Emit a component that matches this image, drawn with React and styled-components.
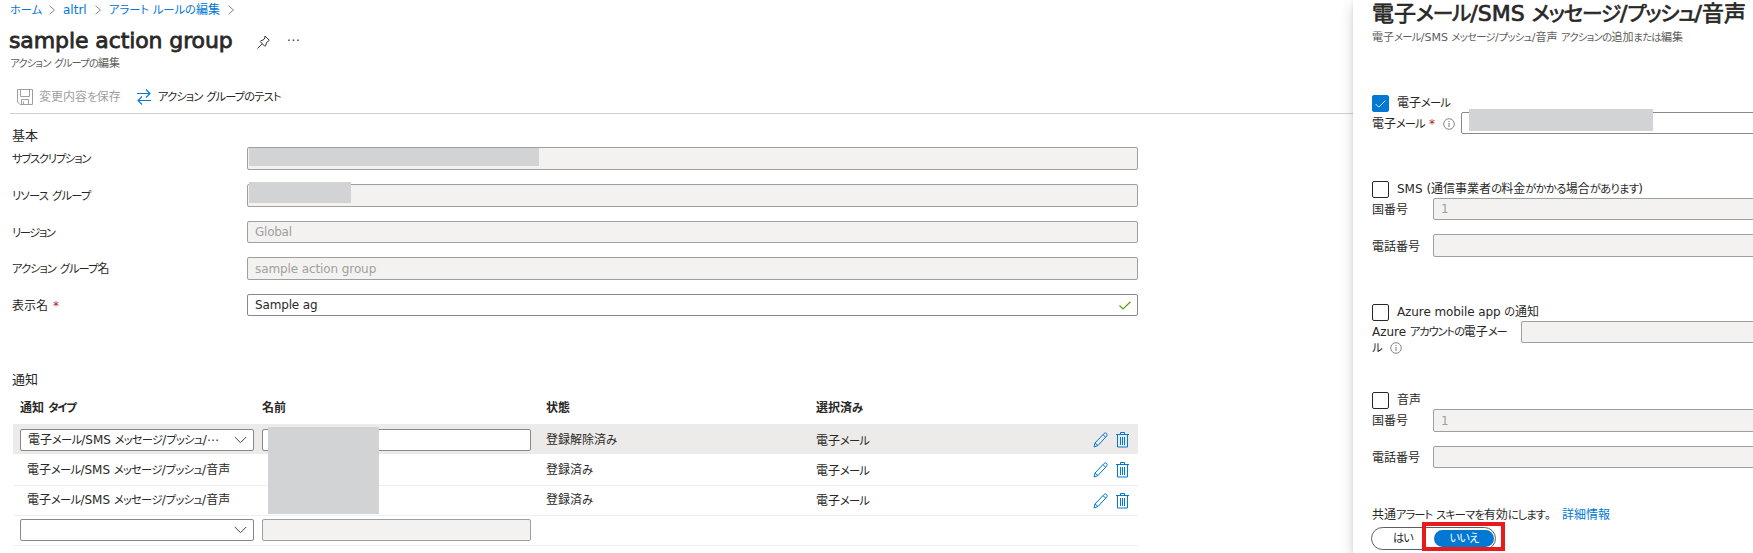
import React from "react";
import styled, { createGlobalStyle, css } from "styled-components";

const GlobalStyle = createGlobalStyle`
  * { box-sizing: border-box; }
  html, body { margin: 0; background: #fff; overflow: hidden; }
  body {
    font-family: "DejaVu Sans", "Noto Sans CJK JP", sans-serif;
    font-size: 12px;
    line-height: 16px;
    color: #292827;
  }
`;

const Shell = styled.div`
  display: flex;
  width: 1753px;
  height: 553px;
  overflow: hidden;
`;

const Main = styled.main`
  width: 1353px;
  flex: none;
  display: flex;
  flex-direction: column;
`;

const TextBox = styled.span`
  display: inline-block;
  flex: none;
  width: ${(p) => p.$w}px;
  white-space: nowrap;
  font-feature-settings: "palt";
  letter-spacing: ${(p) => p.$ls ?? 0}px;
  font-size: ${(p) => p.$size || 12}px;
  font-weight: ${(p) => p.$weight || 400};
  line-height: ${(p) => p.$line || 16}px;
  color: ${(p) => p.$color || "inherit"};
  ${(p) => p.$stroke && css`-webkit-text-stroke: ${p.$stroke}px currentColor;`}
`;

/* Kana are set slightly smaller and tighter than kanji, as in UI fonts. */
const Kana = styled.span`
  font-size: 0.94em;
  letter-spacing: ${(p) => p.$k}px;
`;

const Text = ({ k = 0, children, ...rest }) => (
  <TextBox {...rest}>
    {children.split(/([\u3040-\u30ff]+)/).map((run, i) =>
      i % 2 ? <Kana key={i} $k={k}>{run}</Kana> : run
    )}
  </TextBox>
);

const Required = styled.span`
  color: #a4262c;
  margin-left: 5px;
  width: 6px;
`;

const Breadcrumb = styled.nav`
  display: flex;
  align-items: center;
  height: 20px;
  padding-left: 10px;
  gap: 7px;
  color: #0078d4;
`;

const TitleRow = styled.header`
  display: flex;
  align-items: center;
  height: 28px;
  margin: 7px 0 0 9px;
`;

const Dots = styled.span`
  letter-spacing: 0.7px;
  margin-left: 17px;
`;

const Subtitle = styled.div`
  display: flex;
  height: 17px;
  padding-left: ${(p) => p.$left}px;
  color: #605e5c;
`;

const Toolbar = styled.div`
  display: flex;
  align-items: center;
  height: 30px;
  margin-top: 12px;
  padding: 0 0 5px 17px;
`;

const ToolButton = styled.div`
  display: flex;
  align-items: center;
  gap: ${(p) => p.$gap}px;
  margin-right: 16px;
  color: ${(p) => (p.$disabled ? "#a19f9d" : "#292827")};

  ${TextBox} {
    padding-top: 1px;
  }
`;

const Divider = styled.hr`
  width: 1343px;
  height: 1px;
  border: 0;
  margin: -1px 0 0 10px;
  background: #d0cfce;
`;

const SectionTitle = styled.h2`
  margin: ${(p) => p.$top}px 0 0 12px;
  font-weight: 400;
  height: 16px;
  display: flex;
`;

const Form = styled.div`
  display: grid;
  grid-template-rows: 37px 37px 36px 37px 22px;
  margin-top: 3px;
  padding-left: 12px;
`;

const Field = styled.div`
  display: flex;
  align-items: flex-start;
`;

const FieldLabel = styled.div`
  display: flex;
  width: 235px;
  padding-top: 4px;
`;

const Input = styled.div`
  position: relative;
  display: flex;
  align-items: center;
  justify-content: space-between;
  flex: none;
  width: ${(p) => p.$w}px;
  height: ${(p) => p.$h || 22}px;
  padding: 0 6px 0 7px;
  border: 1px solid ${(p) => (p.$disabled ? "#a19f9d" : "#8a8886")};
  border-radius: 2px;
  background: ${(p) => (p.$disabled ? "#f3f2f1" : "#fff")};
  color: ${(p) => (p.$disabled ? "#a19f9d" : "#292827")};
`;

const Mask = styled.span`
  position: absolute;
  z-index: 1;
  left: ${(p) => p.$x}px;
  top: ${(p) => p.$y}px;
  width: ${(p) => p.$w}px;
  height: ${(p) => p.$h}px;
  background: #d1d3d4;
`;

const Table = styled.div`
  margin: 12px 0 0 13px;
  width: 1125px;
`;

const columns = css`
  display: grid;
  grid-template-columns: 242px 284px 270px 277px 45px;
  padding-left: 7px;
`;

const HeadRow = styled.div`
  ${columns}
  height: 24px;
`;

const Row = styled.div`
  ${columns}
  height: ${(p) => p.$h}px;
  padding-top: ${(p) => p.$top}px;
  background: ${(p) => (p.$selected ? "#edebe9" : "#fff")};
  margin-bottom: ${(p) => (p.$selected ? 1 : 0)}px;
  border-bottom: ${(p) => (p.$selected ? 0 : 1)}px solid #f0efee;
`;

const Cell = styled.div`
  display: flex;
  align-items: flex-start;
  padding: ${(p) => p.$pad || "0"};
`;

const Actions = styled.div`
  display: flex;
  gap: 8px;
  padding-top: ${(p) => p.$top}px;
`;

const Panel = styled.aside`
  width: 400px;
  flex: none;
  position: relative;
  padding-left: 19px;
  background: #fff;
  box-shadow: 0 6px 14px rgba(0, 0, 0, 0.15), 0 1px 4px rgba(0, 0, 0, 0.11);
`;

const PanelTitle = styled.h1`
  margin: 0;
  height: 29px;
  display: flex;
`;

const CheckRow = styled.div`
  display: flex;
  gap: 8px;
  height: 17px;
  margin-top: ${(p) => p.$top}px;
`;

const CheckBox = styled.span`
  display: flex;
  align-items: center;
  justify-content: center;
  width: 17px;
  height: 17px;
  border: 1px solid ${(p) => (p.$on ? "#0078d4" : "#292827")};
  border-radius: 2px;
  background: ${(p) => (p.$on ? "#0078d4" : "#fff")};
`;

const PanelField = styled.div`
  display: flex;
  margin-top: ${(p) => p.$top || 0}px;
  width: 381px;
`;

const PanelLabel = styled.div`
  display: flex;
  flex: none;
  width: ${(p) => p.$w}px;
  padding-top: ${(p) => p.$top ?? 4}px;
`;

const StackedLabel = styled(PanelLabel)`
  flex-direction: column;
`;

const LabelLine = styled.div`
  display: flex;
  height: 16px;
`;

const IconSlot = styled.span`
  display: flex;
  margin-left: ${(p) => p.$left || 0}px;
  padding-top: ${(p) => p.$top || 0}px;
`;

const SchemaRow = styled.div`
  display: flex;
  gap: 11px;
  margin-top: 39px;
`;

const Toggle = styled.div`
  position: relative;
  display: flex;
  width: 125px;
  height: 23px;
  margin: 3px 0 0 -1px;
  border: 1px solid #605e5c;
  border-radius: 12px;
  padding: 2px 1px 2px 21px;
`;

const ToggleOn = styled.span`
  display: flex;
  justify-content: center;
  margin-left: 21px;
  width: 60px;
  height: 17px;
  border-radius: 9px;
  background: #0078d4;
  color: #fff;
`;

const Highlight = styled.span`
  position: absolute;
  left: 50px;
  top: -6px;
  width: 83px;
  height: 29px;
  border: 4px solid #e81a1c;
`;

const Svg = ({ w, h, children, color = "#0078d4", sw = 1, vb }) => (
  <svg width={w} height={h} viewBox={vb || `0 0 ${w} ${h}`} fill="none" stroke={color} strokeWidth={sw}>
    {children}
  </svg>
);
const Crumb = () => <Svg w={7} h={10} color="#8a8886"><path d="M.5.8l5 4.200-5 4.200" /></Svg>;
const Pin = () => (
  <Svg w={13} h={14} color="#323130"><path d="M8 1l4.300 4.300-1 .7L9.300 8l-.5 2.600-1 .7-4.600-4.800.8-.9L6.300 5l1.500-2zM5.200 8.800L.5 13.500" /></Svg>
);
const Save = () => (
  <Svg w={16} h={16} color="#a19f9d"><path d="M.5.5h15v15H3L.5 13zM3.500.5v7h9v-7M4.500 15.500v-5h7v5M6.500 12.500v3" /></Svg>
);
const Swap = () => (
  <Svg w={14} h={16} sw={1.1}><path d="M0 4.500h13M9 .5l4 4-4 4M14 11.500H1M5 7.500l-4 4 4 4" /></Svg>
);
const Check = ({ color, w = 12, h = 9, sw = 1.2 }) => (
  <Svg w={w} h={h} vb="0 0 12 9" color={color} sw={sw}><path d="M.5 4.500l3.500 3.500L11.500.7" /></Svg>
);
const Down = () => <Svg w={13} h={8} color="#484644"><path d="M.8 1l5.700 5.700L12.200 1" /></Svg>;
const Pencil = () => (
  <Svg w={15} h={16}><path d="M1 15l1-4L11 1.500c1.800-1.500 4 .5 2.700 2.500L5 13.500zM2 11l3 2.500M10 2.700l2.700 2.500" /></Svg>
);
const Trash = () => (
  <Svg w={13} h={16}><path d="M0 2.500h13M4.500 2.500v-2h4v2M1.500 2.500v12.500h10v-12.500M4.500 5v8M6.500 5v8M8.500 5v8" /></Svg>
);
const Info = () => (
  <Svg w={12} h={12} color="#797775"><circle cx="6" cy="6" r="5.300" strokeWidth=".9" /><path d="M6 5v4M6 3v1" /></Svg>
);

const MAIL = "電子メール/SMS メッセージ/プッシュ/音声";
const Mail = () => <Text $w={53} k={-0.83}>電子メール</Text>;
const MailType = () => <Text $w={203} k={-0.7}>{MAIL}</Text>;

export default function App() {
  return (
    <>
      <GlobalStyle />
      <Shell lang="ja">
        <Main>
          <Breadcrumb>
            <Text $w={32}>ホーム</Text><Crumb />
            <Text $w={25}>altrl</Text><Crumb />
            <Text $w={112}>アラート ルールの編集</Text><Crumb />
          </Breadcrumb>
          <TitleRow>
            <Text $w={224} $size={22} $line={28} $ls={-0.1} $stroke={0.8}>sample action group</Text>
            <IconSlot $left={24} $top={1}><Pin /></IconSlot>
            <Dots>···</Dots>
          </TitleRow>
          <Subtitle $left={10}><Text $w={110} $size={11} k={-0.83}>アクション グループの編集</Text></Subtitle>
          <Toolbar>
            <ToolButton $disabled $gap={6}><Save /><Text $w={82} k={-0.8}>変更内容を保存</Text></ToolButton>
            <ToolButton $gap={7}><Swap /><Text $w={122} k={-0.88}>アクション グループのテスト</Text></ToolButton>
          </Toolbar>
          <Divider />
          <SectionTitle $top={14}><Text $w={27} $size={13}>基本</Text></SectionTitle>
          <Form>
            <Field><FieldLabel><Text $w={79} k={-1.23}>サブスクリプション</Text></FieldLabel><Input $w={891} $h={23} $disabled><Mask $x={1} $y={0} $w={290} $h={18} /></Input></Field>
            <Field><FieldLabel><Text $w={79} k={-0.76}>リソース グループ</Text></FieldLabel><Input $w={891} $h={23} $disabled><Mask $x={1} $y={-3} $w={102} $h={21} /></Input></Field>
            <Field><FieldLabel><Text $w={43} k={-1.4}>リージョン</Text></FieldLabel><Input $w={891} $disabled><Text $w={37} $ls={-0.25}>Global</Text></Input></Field>
            <Field><FieldLabel><Text $w={98} k={-0.97}>アクション グループ名</Text></FieldLabel><Input $w={891} $h={23} $disabled><Text $w={122} $ls={-0.1}>sample action group</Text></Input></Field>
            <Field><FieldLabel><Text $w={36}>表示名</Text><Required>*</Required></FieldLabel><Input $w={891}><Text $w={63} $ls={-0.15}>Sample ag</Text><Check color="#57a300" /></Input></Field>
          </Form>
          <SectionTitle $top={56}><Text $w={27} $size={13}>通知</Text></SectionTitle>
          <Table>
            <HeadRow>
              <Text $w={56} $weight={700} k={-1.17}>通知 タイプ</Text>
              <Text $w={24} $weight={700}>名前</Text>
              <Text $w={25} $weight={700}>状態</Text>
              <Text $w={48} $weight={700}>選択済み</Text>
            </HeadRow>
            <Row $h={30} $top={5} $selected>
              <Cell><Input $w={234}><Text $w={191} k={-0.74}>電子メール/SMS メッセージ/プッシュ/⋯</Text><Down /></Input></Cell>
              <Cell><Input $w={269}><Mask $x={5} $y={-3} $w={111} $h={87} /></Input></Cell>
              <Cell $pad="3px 0 0"><Text $w={72}>登録解除済み</Text></Cell>
              <Cell $pad="4px 0 0"><Mail /></Cell>
              <Actions $top={3}><Pencil /><Trash /></Actions>
            </Row>
            <Row $h={31} $top={7}>
              <Cell $pad="0 0 0 7px"><MailType /></Cell>
              <Cell />
              <Cell><Text $w={48}>登録済み</Text></Cell>
              <Cell $pad="1px 0 0"><Mail /></Cell>
              <Actions $top={0}><Pencil /><Trash /></Actions>
            </Row>
            <Row $h={30} $top={6}>
              <Cell $pad="0 0 0 7px"><MailType /></Cell>
              <Cell />
              <Cell><Text $w={48}>登録済み</Text></Cell>
              <Cell $pad="1px 0 0"><Mail /></Cell>
              <Actions $top={1}><Pencil /><Trash /></Actions>
            </Row>
            <Row $h={30} $top={3}>
              <Cell><Input $w={234}><span /><Down /></Input></Cell>
              <Cell><Input $w={269} $disabled /></Cell>
            </Row>
          </Table>
        </Main>
        <Panel>
          <PanelTitle><Text $w={375} $size={22} $line={28} $stroke={0.7} k={-1.17}>{MAIL}</Text></PanelTitle>
          <Subtitle $left={0}><Text $w={312} $size={11} k={-0.71}>{`${MAIL} アクションの追加または編集`}</Text></Subtitle>
          <CheckRow $top={49}><CheckBox $on><Check color="#fff" w={11} h={8} sw={1} /></CheckBox><Mail /></CheckRow>
          <PanelField>
            <PanelLabel $w={89}><Text $w={52} k={-0.95}>電子メール</Text><Required>*</Required><IconSlot $left={8} $top={2}><Info /></IconSlot></PanelLabel>
            <Input $w={400}><Mask $x={7} $y={-4} $w={184} $h={22} /></Input>
          </PanelField>
          <CheckRow $top={47}><CheckBox /><Text $w={247} k={-0.65}>SMS (通信事業者の料金がかかる場合があります)</Text></CheckRow>
          <PanelField><PanelLabel $w={61}><Text $w={36}>国番号</Text></PanelLabel><Input $w={400} $disabled>1</Input></PanelField>
          <PanelField $top={14}><PanelLabel $w={61} $top={5}><Text $w={48}>電話番号</Text></PanelLabel><Input $w={400} $h={23} $disabled /></PanelField>
          <CheckRow $top={47}><CheckBox /><Text $w={143} $ls={-0.1}>Azure mobile app の通知</Text></CheckRow>
          <PanelField>
            <StackedLabel $w={149} $top={3}>
              <LabelLine><Text $w={135} k={-1.13}>Azure アカウントの電子メー</Text></LabelLine>
              <LabelLine><Text $w={11}>ル</Text><IconSlot $left={7} $top={2}><Info /></IconSlot></LabelLine>
            </StackedLabel>
            <Input $w={400} $disabled />
          </PanelField>
          <CheckRow $top={36}><CheckBox /><Text $w={25}>音声</Text></CheckRow>
          <PanelField><PanelLabel $w={61}><Text $w={36}>国番号</Text></PanelLabel><Input $w={400} $h={23} $disabled>1</Input></PanelField>
          <PanelField $top={14}><PanelLabel $w={61}><Text $w={48}>電話番号</Text></PanelLabel><Input $w={400} $disabled /></PanelField>
          <SchemaRow><Text $w={179} k={-0.93}>共通アラート スキーマを有効にします。</Text><Text $w={48} $color="#0078d4">詳細情報</Text></SchemaRow>
          <Toggle>
            <Text $w={20} k={-0.95}>はい</Text>
            <ToggleOn><Text $w={29} k={-0.82}>いいえ</Text></ToggleOn>
            <Highlight />
          </Toggle>
        </Panel>
      </Shell>
    </>
  );
}
